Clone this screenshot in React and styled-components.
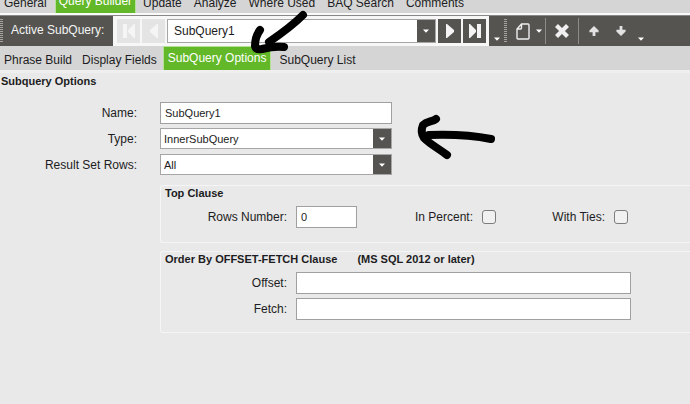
import React from "react";
import styled, { createGlobalStyle } from "styled-components";

const GlobalStyle = createGlobalStyle`
  * {
    box-sizing: border-box;
  }

  html {
    background: #e9e9e9;
  }

  body {
    margin: 0;
    overflow: hidden;
    color: #1c1c22;
    font-family: "Liberation Sans", Arial, sans-serif;
    font-size: 12px;
    line-height: 16px;
  }

  button,
  input,
  select {
    margin: 0;
    color: inherit;
    font: inherit;
  }
`;

const Page = styled.div`
  position: relative;
  min-height: 100vh;
  background: #e9e9e9;
`;

const TopTabs = styled.nav`
  display: flex;
  align-items: flex-end;
  height: 15px;
  overflow: hidden;
  background: #d5d5d5;
  border-bottom: 2px solid #fafafa;
`;

const SubTabs = styled.nav`
  display: flex;
  align-items: flex-end;
  height: 27px;
  background: #d5d5d5;
  border-bottom: 3px solid #efefef;
`;

const Tab = styled.button`
  flex: none;
  height: 24px;
  padding: ${({ $top }) => ($top ? "6px 8px 2px 4px" : "4px 6px 0 4px")};
  border: 0;
  background: none;
  white-space: nowrap;
`;

const ActiveTab = styled(Tab)`
  margin: ${({ $top }) => ($top ? "0 3px 0 0" : "0 4px 0 0")};
  padding: ${({ $top }) => ($top ? "4px 4px" : "0 5px")};
  background: #62b828;
  color: #fff;
  box-shadow: inset 1px 1px #b5e197, inset -1px 0 #b5e197;
`;

const Toolbar = styled.div`
  display: flex;
  height: 31px;
  background: #555451;
  border-top: 1px solid #888785;
`;

const Grip = styled.span`
  width: 3px;
  height: 24px;
  margin: 3px 0;
  background: repeating-linear-gradient(#a3a2a0 0 1px, #555451 1px 2px);
`;

const ToolbarLabel = styled.label`
  width: 110px;
  padding: 6px 0 0 8px;
  color: #f4f4f4;
`;

const Navigator = styled.div`
  display: flex;
  gap: 2px;
  width: 376px;
  padding: 3px 3px 3px 4px;
  background: #f7f7f7;
`;

const NavButton = styled.button`
  display: flex;
  flex: none;
  align-items: center;
  justify-content: center;
  width: 23px;
  padding: 0;
  border: 0;
  background: #555451;
  color: #f4f4f4;

  &:disabled {
    background: #e4e4e4;
    color: #f5f5f5;
  }
`;

const Combo = styled.div`
  display: flex;
  flex: ${({ $grow }) => ($grow ? 1 : "none")};
  width: ${({ $grow }) => ($grow ? "auto" : "232px")};
  height: ${({ $grow }) => ($grow ? "24px" : "21px")};
  border: 1px solid #a6a6a6;
  background: #fff;
`;

const Select = styled.select`
  flex: 1;
  min-width: 0;
  padding: 0 0 0 ${({ $indent }) => $indent || 3}px;
  border: 0;
  outline: 0;
  appearance: none;
  background: #fff;
  font-size: ${({ $size }) => $size || 11}px;
`;

const ComboArrow = styled.span`
  display: flex;
  flex: none;
  align-items: center;
  justify-content: center;
  width: 18px;
  background: #555451;
  pointer-events: none;
`;

const Tools = styled.div`
  display: flex;
  align-items: center;
  color: #e6e6e6;
`;

const ToolButton = styled.button`
  display: flex;
  align-items: center;
  justify-content: center;
  gap: 6px;
  width: ${({ $width }) => $width}px;
  height: 30px;
  padding: 0;
  border: 0;
  background: none;
`;

const MenuButton = styled(ToolButton)`
  justify-content: flex-end;
  padding-right: 3px;
`;

const Overflow = styled(ToolButton)`
  align-items: flex-end;
  padding-bottom: 5px;
`;

const Separator = styled.span`
  width: 1px;
  height: 26px;
  background: #8d8c8a;
`;

const Heading = styled.h2`
  margin: 0;
  padding: 0 1px;
  font-size: 11px;
  line-height: 16px;
`;

const Form = styled.form`
  display: flex;
  flex-direction: column;
  gap: 8px;
`;

const Fields = styled.div`
  display: grid;
  grid-template-columns: 137px 1fr;
  grid-template-rows: 21px 21px 21px;
  gap: 5px 23px;
  align-items: center;
  margin: 13px 0 2px;
`;

const Label = styled.label`
  flex: none;
  text-align: right;
`;

const TextInput = styled.input`
  width: ${({ $width }) => $width}px;
  height: 22px;
  padding: 0 4px;
  border: 1px solid #a0a0a0;
  outline: 0;
  background: #fff;
  font-size: 11px;
`;

const Group = styled.section`
  margin-left: 160px;
  padding: 0 0 8px 4px;
  border: 1px solid #f5f5f5;
  border-right: 0;
  border-radius: 3px 0 0 3px;
`;

const GroupTitle = styled.h3`
  display: flex;
  gap: 20px;
  margin: 0 0 6px;
  font-size: 11px;
  line-height: 14px;
`;

const GroupRow = styled.div`
  display: grid;
  grid-template-columns: 122px auto;
  gap: 9px;
  align-items: center;
  justify-content: start;
  margin-bottom: 4px;
`;

const TopRow = styled(GroupRow)`
  grid-template-columns: 122px 61px 107px 14px 100px 14px;
  margin-bottom: 6px;
`;

const Checkbox = styled.input`
  width: 14px;
  height: 14px;
  border: 1px solid #7d7d7d;
  border-radius: 3px;
  appearance: none;
  background: #f1f1f1;

  &:checked {
    background: #62b828;
  }
`;

const Marks = styled.svg`
  position: absolute;
  top: 0;
  left: 0;
  pointer-events: none;
`;

const DownArrow = () => (
  <svg width="6" height="4" viewBox="0 0 6 4" aria-hidden="true">
    <path d="M0 0.5h6L3 3.8z" fill="#fff" />
  </svg>
);

const StepIcon = ({ back, end }) => (
  <svg
    width="14"
    height="14"
    viewBox="0 0 14 14"
    fill="currentColor"
    transform={back ? "scale(-1 1)" : undefined}
    aria-hidden="true"
  >
    {end ? <path d="M1 0h1l6 6v2l-6 6H1zM9 0h4v14H9z" /> : <path d="M3 0h1l7 6v2l-7 6H3z" />}
  </svg>
);

const PageIcon = () => (
  <svg width="14" height="17" viewBox="0 0 14 17" fill="none" stroke="#eee" strokeWidth="1.4" aria-hidden="true">
    <path d="M5.5 1H12q1 0 1 1v13q0 1-1 1H2q-1 0-1-1V6zM5.5 1v4q0 1-1 1H1" />
  </svg>
);

const CrossIcon = () => (
  <svg width="14" height="14" viewBox="0 0 14 14" stroke="#f0f0f0" strokeWidth="4.2" aria-hidden="true">
    <path d="M1.5 1.5l11 11M12.5 1.5l-11 11" />
  </svg>
);

const MoveIcon = ({ down }) => (
  <svg
    width="10"
    height="10"
    viewBox="0 0 10 10"
    fill="#e2e2e2"
    transform={down ? "scale(1 -1)" : undefined}
    aria-hidden="true"
  >
    <path d="M5 0l4.6 4.6v1.6H6.4V10H3.6V6.2H0.4V4.6z" />
  </svg>
);

const App = () => {
  return (
    <>
      <GlobalStyle />
      <Page>
        <TopTabs>
          <Tab $top>General</Tab>
          <ActiveTab $top>Query Builder</ActiveTab>
          <Tab $top>Update</Tab>
          <Tab $top>Analyze</Tab>
          <Tab $top>Where Used</Tab>
          <Tab $top>BAQ Search</Tab>
          <Tab $top>Comments</Tab>
        </TopTabs>
        <Toolbar>
          <Grip />
          <ToolbarLabel htmlFor="active">Active SubQuery:</ToolbarLabel>
          <Navigator>
            <NavButton disabled aria-label="First">
              <StepIcon back end />
            </NavButton>
            <NavButton disabled aria-label="Previous">
              <StepIcon back />
            </NavButton>
            <Combo $grow>
              <Select id="active" $indent={6} $size={12}>
                <option>SubQuery1</option>
              </Select>
              <ComboArrow>
                <DownArrow />
              </ComboArrow>
            </Combo>
            <NavButton aria-label="Next">
              <StepIcon />
            </NavButton>
            <NavButton aria-label="Last">
              <StepIcon end />
            </NavButton>
          </Navigator>
          <Tools>
            <Overflow $width={15} aria-label="More navigation">
              <DownArrow />
            </Overflow>
            <Grip />
            <MenuButton $width={38} aria-label="New">
              <PageIcon />
              <DownArrow />
            </MenuButton>
            <Separator />
            <ToolButton $width={32} aria-label="Delete">
              <CrossIcon />
            </ToolButton>
            <Separator />
            <ToolButton $width={30} aria-label="Move up">
              <MoveIcon />
            </ToolButton>
            <ToolButton $width={24} aria-label="Move down">
              <MoveIcon down />
            </ToolButton>
            <Overflow $width={16} aria-label="More tools">
              <DownArrow />
            </Overflow>
          </Tools>
        </Toolbar>
        <SubTabs>
          <Tab>Phrase Build</Tab>
          <Tab>Display Fields</Tab>
          <ActiveTab>SubQuery Options</ActiveTab>
          <Tab>SubQuery List</Tab>
        </SubTabs>

        <Heading>Subquery Options</Heading>
        <Form>
          <Fields>
            <Label htmlFor="name">Name:</Label>
            <TextInput id="name" $width={232} defaultValue="SubQuery1" />
            <Label htmlFor="type">Type:</Label>
            <Combo>
              <Select id="type">
                <option>InnerSubQuery</option>
              </Select>
              <ComboArrow>
                <DownArrow />
              </ComboArrow>
            </Combo>
            <Label htmlFor="rows">Result Set Rows:</Label>
            <Combo>
              <Select id="rows">
                <option>All</option>
              </Select>
              <ComboArrow>
                <DownArrow />
              </ComboArrow>
            </Combo>
          </Fields>

          <Group>
            <GroupTitle>Top Clause</GroupTitle>
            <TopRow>
              <Label htmlFor="number">Rows Number:</Label>
              <TextInput id="number" $width={61} defaultValue="0" />
              <Label htmlFor="percent">In Percent:</Label>
              <Checkbox id="percent" type="checkbox" />
              <Label htmlFor="ties">With Ties:</Label>
              <Checkbox id="ties" type="checkbox" />
            </TopRow>
          </Group>

          <Group>
            <GroupTitle>
              <span>Order By OFFSET-FETCH Clause</span>
              <span>(MS SQL 2012 or later)</span>
            </GroupTitle>
            <GroupRow>
              <Label htmlFor="offset">Offset:</Label>
              <TextInput id="offset" $width={335} />
            </GroupRow>
            <GroupRow>
              <Label htmlFor="fetch">Fetch:</Label>
              <TextInput id="fetch" $width={335} />
            </GroupRow>
          </Group>
        </Form>

        {/* hand-drawn pointers */}
        <Marks
          width="510"
          height="170"
          viewBox="0 0 510 170"
          fill="none"
          stroke="#000"
          strokeWidth="8"
          strokeLinecap="round"
          strokeLinejoin="round"
          aria-hidden="true"
        >
          <path d="M303 15C294 24 285 31 269 42" />
          <path d="M260 30C257 34 255 40 255 46Q256 50 262 49C270 47 277 46 284 47" />
          <path d="M491 139C476 136 458 134 429 135" />
          <path d="M436 119C432 122 427 121 423 125Q420 132 424 138C431 145 438 148 447 155" />
        </Marks>
      </Page>
    </>
  );
};

export default App;
